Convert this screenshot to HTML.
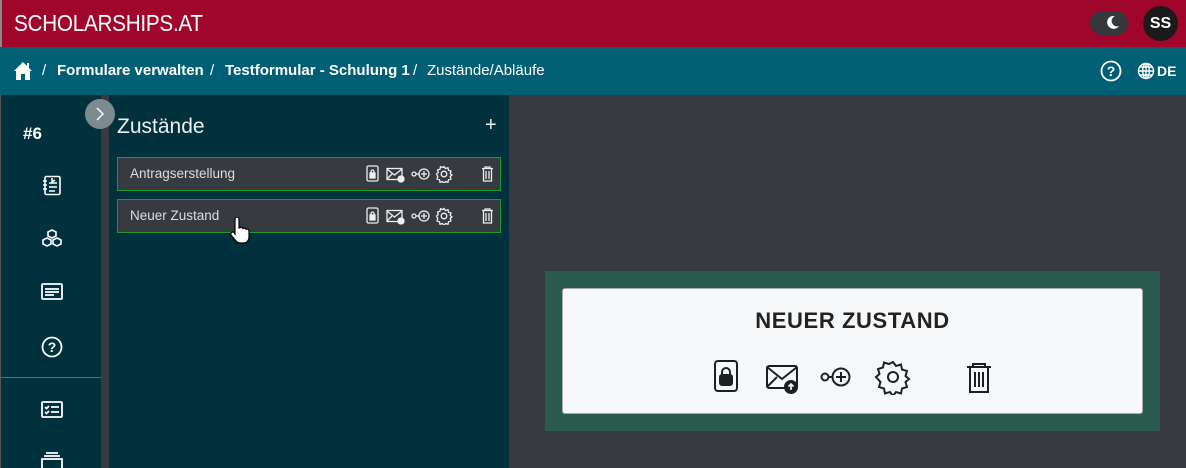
<!DOCTYPE html>
<html><head><meta charset="utf-8"><style>
*{box-sizing:border-box;margin:0;padding:0}
body{width:1186px;height:468px;overflow:hidden;font-family:"Liberation Sans",sans-serif;background:#373a40;position:relative}
.hdr{position:absolute;left:0;top:0;width:1186px;height:47px;background:#a0052b;border-left:2px solid #8a8a8a}
.logo{position:absolute;left:12px;top:10px;color:#fff;font-size:23px;letter-spacing:-0.3px;transform:scaleX(0.9);transform-origin:left}
.bc{position:absolute;left:0;top:47px;width:1186px;height:48px;background:#005f74;color:#fff;font-size:15px}
.bc span{position:absolute;top:15px}
.side{position:absolute;left:0;top:95px;width:101px;height:373px;background:#00313d;border-left:1px solid #555}
.strip{position:absolute;left:101px;top:95px;width:8px;height:373px;background:#373a40}
.panel{position:absolute;left:109px;top:95px;width:400px;height:373px;background:#00313d}
.row{position:absolute;left:117px;width:384px;height:34px;background:#373a40;border:1px solid #1d9a2a;color:#ddd;font-size:13.5px}
.row .t{position:absolute;left:12px;top:8px}
.row svg{position:absolute;top:7px}
.green{position:absolute;left:545px;top:271px;width:615px;height:160px;background:#2b5a4e}
.card{position:absolute;left:562px;top:288px;width:581px;height:126px;background:#f7f8fa;border:1px solid #aaa;border-radius:3px}
</style></head><body>
<div class="hdr"><div class="logo">SCHOLARSHIPS.AT</div>
<div style="position:absolute;left:1088px;top:11px;width:38px;height:24px;border-radius:12px;background:#34373c"></div>
<svg style="position:absolute;left:1104px;top:15px" width="14" height="15" viewBox="0 0 14 15"><path d="M9 1a6.5 6.5 0 1 0 4 10A5 5 0 0 1 9 1z" fill="#fff"/></svg>
<div style="position:absolute;left:1141px;top:6px;width:35px;height:35px;border-radius:50%;background:#1a1a1a;color:#fff;font-weight:bold;font-size:16px;text-align:center;line-height:35px">SS</div>
</div>
<div class="bc">
<svg style="position:absolute;left:13px;top:14px" width="20" height="20" viewBox="0 0 20 20"><path d="M10 1L1 10h2v9h5v-6h4v6h5v-9h2L16 7V2h-2v3z" fill="#fff"/></svg>
<span style="left:42px">/</span>
<span style="left:57px;font-weight:bold">Formulare verwalten</span>
<span style="left:210px">/</span>
<span style="left:225px;font-weight:bold">Testformular - Schulung 1</span>
<span style="left:413px">/</span>
<span style="left:427px">Zustände/Abläufe</span>
<svg style="position:absolute;left:1100px;top:13px" width="22" height="22" viewBox="0 0 22 22"><circle cx="11" cy="11" r="9.5" fill="none" stroke="#fff" stroke-width="1.8"/><text x="11" y="16" font-size="14" font-weight="bold" fill="#fff" text-anchor="middle" font-family="Liberation Sans">?</text></svg>
<svg style="position:absolute;left:1137px;top:15px" width="18" height="18" viewBox="0 0 18 18" fill="none" stroke="#fff" stroke-width="1.4"><circle cx="9" cy="9" r="7.5"/><ellipse cx="9" cy="9" rx="3.3" ry="7.5"/><path d="M1.5 9h15M3 5h12M3 13h12M9 1.5v15"/></svg>
<span style="left:1157px;font-weight:bold;font-size:14px;top:16px">DE</span>
</div>
<div class="side">
<div style="position:absolute;left:22px;top:29px;color:#fff;font-weight:bold;font-size:17px">#6</div>
<svg style="position:absolute;left:40px;top:80px" width="21" height="21" viewBox="0 0 21 21" fill="none" stroke="#fff" stroke-width="1.6"><rect x="4" y="1.5" width="15" height="18" rx="1.5"/><path d="M2 6h4M2 10h4M2 14h4M8 8h8M8 12h8M8 16h6M11 3v4l3-2"/></svg>
<svg style="position:absolute;left:40px;top:134px" width="22" height="20" viewBox="0 0 22 20" fill="none" stroke="#fff" stroke-width="1.6"><path d="M11 1l4 2v4l-4 2-4-2V3zM6 9l4 2v4l-4 2-4-2v-4zM16 9l4 2v4l-4 2-4-2v-4z"/></svg>
<svg style="position:absolute;left:40px;top:188px" width="22" height="18" viewBox="0 0 22 18" fill="none" stroke="#fff" stroke-width="1.8"><rect x="1" y="1" width="20" height="15" rx="1"/><path d="M4 6h14M4 9h14M4 12h9"/></svg>
<svg style="position:absolute;left:40px;top:241px" width="22" height="22" viewBox="0 0 22 22"><circle cx="11" cy="11" r="9.5" fill="none" stroke="#fff" stroke-width="1.8"/><text x="11" y="16" font-size="14" font-weight="bold" fill="#fff" text-anchor="middle" font-family="Liberation Sans">?</text></svg>
<div style="position:absolute;left:0;top:282px;width:101px;height:1px;background:#667"></div>
<svg style="position:absolute;left:40px;top:306px" width="22" height="18" viewBox="0 0 22 18" fill="none" stroke="#fff" stroke-width="1.8"><rect x="1" y="1" width="20" height="15" rx="1"/><path d="M4 6l1.5 1.5L8 5M4 11l1.5 1.5L8 10M10 6h8M10 11h8"/></svg>
<svg style="position:absolute;left:40px;top:357px" width="22" height="16" viewBox="0 0 22 16" fill="none" stroke="#fff" stroke-width="1.8"><path d="M5 1h12M3 4h16"/><rect x="1" y="7" width="20" height="12"/></svg>
</div>
<div class="strip"></div>
<div class="panel">
<div style="position:absolute;left:8px;top:20px;color:#eee;font-size:21px">Zustände</div>
<div style="position:absolute;left:376px;top:19px;color:#eee;font-size:20px">+</div>
</div>
<div style="position:absolute;left:85px;top:99px;width:30px;height:30px;border-radius:50%;background:#7b8b8f"></div>
<svg style="position:absolute;left:95px;top:106px" width="10" height="16" viewBox="0 0 10 16"><path d="M2 2l6 6-6 6" fill="none" stroke="#fff" stroke-width="1.5"/></svg>

<div class="row" style="top:157px"><span class="t">Antragserstellung</span>
<svg style="left:248px" width="130" height="18" viewBox="0 0 130 18" fill="none" stroke="#eee" stroke-width="1.3"><rect x="1" y="1" width="11" height="15" rx="1.5"/><rect x="4" y="8" width="5" height="5" fill="#eee"/><path d="M5 8V6.5a1.5 1.5 0 0 1 3 0V8"/><rect x="21" y="3.5" width="15" height="11"/><path d="M21 4l7.5 6 7.5-6M21 14l5-5"/><circle cx="35" cy="14" r="3" fill="#eee"/><circle cx="48" cy="9" r="2"/><path d="M50 9h3"/><circle cx="58" cy="9" r="5"/><path d="M58 6v6M55 9h6"/><circle cx="78" cy="9" r="2.8"/><path d="M78 1.5l1.5 2 2.5-.8.5 2.5 2.5.8-.8 2.5 1.8 1.5-1.8 1.5.8 2.5-2.5.8-.5 2.5-2.5-.8-1.5 2-1.5-2-2.5.8-.5-2.5-2.5-.8.8-2.5L70.5 9l1.8-1.5-.8-2.5 2.5-.8.5-2.5 2.5.8z"/><path d="M116 3.5h11M119 3.5V2h5v1.5M117.5 3.5v12.5h8V3.5M120 6v8M123 6v8"/></svg></div>
<div class="row" style="top:199px"><span class="t">Neuer Zustand</span>
<svg style="left:248px" width="130" height="18" viewBox="0 0 130 18" fill="none" stroke="#eee" stroke-width="1.3"><rect x="1" y="1" width="11" height="15" rx="1.5"/><rect x="4" y="8" width="5" height="5" fill="#eee"/><path d="M5 8V6.5a1.5 1.5 0 0 1 3 0V8"/><rect x="21" y="3.5" width="15" height="11"/><path d="M21 4l7.5 6 7.5-6M21 14l5-5"/><circle cx="35" cy="14" r="3" fill="#eee"/><circle cx="48" cy="9" r="2"/><path d="M50 9h3"/><circle cx="58" cy="9" r="5"/><path d="M58 6v6M55 9h6"/><circle cx="78" cy="9" r="2.8"/><path d="M78 1.5l1.5 2 2.5-.8.5 2.5 2.5.8-.8 2.5 1.8 1.5-1.8 1.5.8 2.5-2.5.8-.5 2.5-2.5-.8-1.5 2-1.5-2-2.5.8-.5-2.5-2.5-.8.8-2.5L70.5 9l1.8-1.5-.8-2.5 2.5-.8.5-2.5 2.5.8z"/><path d="M116 3.5h11M119 3.5V2h5v1.5M117.5 3.5v12.5h8V3.5M120 6v8M123 6v8"/></svg></div>
<svg style="position:absolute;left:228px;top:217px" width="26" height="28" viewBox="0 0 26 28"><path d="M7 2a2 2 0 0 1 4 0v9l1-.3a2 2 0 0 1 3 .8 2 2 0 0 1 3 .8 2 2 0 0 1 3 1.5V20c0 3-2 6-5 6h-4c-2 0-3-1-4-2l-5-6a2 2 0 0 1 3-2.5L7 17z" fill="#fff" stroke="#000" stroke-width="1.2"/></svg>

<div class="green"></div>
<div class="card">
<div style="position:absolute;left:0;top:19px;width:100%;text-align:center;font-weight:bold;font-size:22px;letter-spacing:0.6px;color:#222">NEUER ZUSTAND</div>
<svg style="position:absolute;left:150px;top:70px" width="280" height="36" viewBox="0 0 280 36" fill="none" stroke="#1e1f22" stroke-width="2"><rect x="2" y="2" width="22" height="30" rx="3"/><rect x="7" y="16" width="12" height="10" rx="2" fill="#1e1f22"/><path d="M9 16v-3a4 4 0 0 1 8 0v3"/><rect x="54" y="7" width="30" height="22" rx="2"/><path d="M54 8l15 12 15-12M54 28l10-10"/><circle cx="78" cy="28" r="6" fill="#1e1f22"/><path d="M78 31v-6M75.5 27.5L78 25l2.5 2.5" stroke="#fff" stroke-width="1.6"/><circle cx="112" cy="18" r="3.5"/><path d="M115.5 18h4"/><circle cx="128" cy="18" r="8.5"/><path d="M128 13v10M123 18h10"/><circle cx="180" cy="18" r="5"/><path d="M180 3l3 4 5-1.5 1 5 5 1.5-1.5 5 3.5 3-3.5 3 1.5 5-5 1.5-1 5-5-1.5-3 4-3-4-5 1.5-1-5-5-1.5 1.5-5L163 18l3.5-3-1.5-5 5-1.5 1-5 5 1.5z"/><path d="M254 8h24M260 8V5h12v3M257 8v25h18V8M262 13v15M266 13v15M270 13v15"/></svg>
</div>
</body></html>
